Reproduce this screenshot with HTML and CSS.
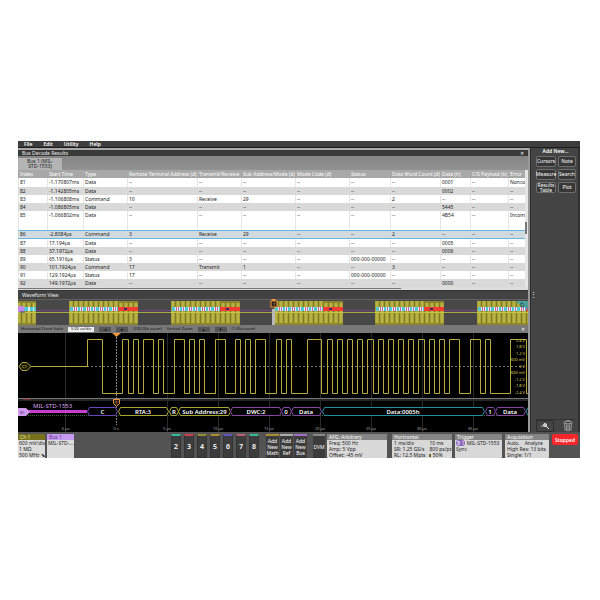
FILE: index.html
```html
<!DOCTYPE html>
<html lang="en">
<head>
<meta charset="utf-8">
<title>Oscilloscope bus decode</title>
<link rel="stylesheet" href="styles.css">
</head>
<body>
<div class="app">
  <nav class="menu"><a href="#">File</a><a href="#">Edit</a><a href="#">Utility</a><a href="#">Help</a></nav>
  <div class="workspace">
    <main class="main">
      <section>
        <h2 class="title">Bus Decode Results <button class="close" aria-label="Close results">✕</button></h2>
        <div class="tabs"><button class="tab">Bus 1 (MIL-<br>STD-1553)</button></div>
        <div class="results">
          <table>
            <colgroup><col class="w-index"><col class="w-time"><col class="w-mid"><col class="w-rta"><col class="w-mid"><col class="w-mode"><col class="w-mode"><col class="w-status"><col class="w-count"><col class="w-data"><col class="w-pay"><col></colgroup>
            <thead><tr><th>Index</th><th>Start Time</th><th>Type</th><th>Remote Terminal Address (d)</th><th>Transmit/Receive</th><th>Sub Address/Mode (d)</th><th>Mode Code (d)</th><th>Status</th><th>Data Word Count (d)</th><th>Data (h)</th><th>C/S Payload (b)</th><th>Error</th></tr></thead>
            <tbody>
              <tr class="first"><td>81</td><td>-1.170807ms</td><td>Data</td><td>--</td><td>--</td><td>--</td><td>--</td><td>--</td><td>--</td><td>0001</td><td>--</td><td>Nonco</td></tr>
              <tr class="alt"><td>82</td><td>-1.142805ms</td><td>Data</td><td>--</td><td>--</td><td>--</td><td>--</td><td>--</td><td>--</td><td>0002</td><td>--</td><td>--</td></tr>
              <tr><td>83</td><td>-1.106808ms</td><td>Command</td><td>10</td><td>Receive</td><td>29</td><td>--</td><td>--</td><td>2</td><td>--</td><td>--</td><td>--</td></tr>
              <tr class="alt"><td>84</td><td>-1.086805ms</td><td>Data</td><td>--</td><td>--</td><td>--</td><td>--</td><td>--</td><td>--</td><td>5445</td><td>--</td><td>--</td></tr>
              <tr class="tall"><td>85</td><td>-1.066802ms</td><td>Data</td><td>--</td><td>--</td><td>--</td><td>--</td><td>--</td><td>--</td><td>4B54</td><td>--</td><td>Incom</td></tr>
              <tr class="alt selected"><td>86</td><td>-2.8084µs</td><td>Command</td><td>3</td><td>Receive</td><td>29</td><td>--</td><td>--</td><td>2</td><td>--</td><td>--</td><td>--</td></tr>
              <tr><td>87</td><td>17.194µs</td><td>Data</td><td>--</td><td>--</td><td>--</td><td>--</td><td>--</td><td>--</td><td>0005</td><td>--</td><td>--</td></tr>
              <tr class="alt"><td>88</td><td>37.1972µs</td><td>Data</td><td>--</td><td>--</td><td>--</td><td>--</td><td>--</td><td>--</td><td>0006</td><td>--</td><td>--</td></tr>
              <tr><td>89</td><td>65.1916µs</td><td>Status</td><td>3</td><td>--</td><td>--</td><td>--</td><td>000-000-00000</td><td>--</td><td>--</td><td>--</td><td>--</td></tr>
              <tr class="alt"><td>90</td><td>101.1924µs</td><td>Command</td><td>17</td><td>Transmit</td><td>1</td><td>--</td><td>--</td><td>3</td><td>--</td><td>--</td><td>--</td></tr>
              <tr><td>91</td><td>129.1924µs</td><td>Status</td><td>17</td><td>--</td><td>--</td><td>--</td><td>000-000-00000</td><td>--</td><td>--</td><td>--</td><td>--</td></tr>
              <tr class="alt"><td>92</td><td>149.1972µs</td><td>Data</td><td>--</td><td>--</td><td>--</td><td>--</td><td>--</td><td>--</td><td>0000</td><td>--</td><td>--</td></tr>
            </tbody>
          </table>
          <div class="vscroll"><span></span></div>
        </div>
        <div class="hscroll"><span></span></div>
      </section>
      <section>
        <h2 class="title wave-title">Waveform View</h2>
        <svg class="plot" viewBox="18 299 510 26">
          <defs>
            <pattern id="bars" width="5" height="24" patternUnits="userSpaceOnUse"><path fill="#a8a236" d="M0 0h5v24H0z"/><path fill="#b8b244" d="M1 0h2v24H1z"/><path fill="#7e7926" d="M4 0h1v24H4z"/></pattern>
            <pattern id="packets" width="13" height="4" y="307" patternUnits="userSpaceOnUse"><path fill="#dcecf0" d="M0 0h13v4H0z"/><path fill="#4cc8d8" d="M1 0h3v4H1zM9 0h2v4H9z"/><path fill="#e0607c" d="M5 0h1v4H5z"/><path fill="#b864c8" d="M7 0h1v4H7zM12 0h1v4h-1z"/></pattern>
            <g id="burst"><path fill="url(#bars)" d="M0 301h69v24H0z"/><path fill="#8c872c" d="M49 301h20v2H49zM0 323h69v2H0z"/><path fill="url(#packets)" d="M1 307h48v4H1z"/><path fill="#f43b31" d="M49 307h20v4H49z"/><path fill="#3b2b66" d="M55 308h3v2h-3z"/><path fill="#c7c644" d="M0 312h69v1H0z"/></g>
          </defs>
          <path fill="#484848" d="M18 299h510v26H18z"/>
          <path fill="#606060" d="M18 299h510v1H18z"/>
          <path fill="#7c3d84" d="M18 310h510v1H18z"/><path fill="#a5ab3d" d="M18 312h510v1H18z"/>
          <use href="#burst" x="-33"/><use href="#burst" x="69"/><use href="#burst" x="171"/><use href="#burst" x="274"/><use href="#burst" x="375"/><use href="#burst" x="477"/>
          <path fill="#4cc8d8" d="M18 307h18v4H18z"/><path fill="#dcecf0" d="M28 307h2v4h-2zM33 307h1v4h-1z"/>
          <path fill="#c887e8" d="M18 306h5l2 3-2 3h-5z"/><path fill="none" stroke="#28407c" d="M20 312h5"/>
          <path fill="#f0963c" d="M271 299h5l-2 3z"/><rect x="271" y="301" width="6" height="6" fill="#2a2018" stroke="#f0963c"/><text class="tiny orange" x="273" y="306">T</text>
          <path fill="#b9b9b9" d="M272 309h3v16h-3z"/>
          <path fill="#2aa5c4" fill-opacity=".7" d="M515 301h13v9z"/><circle cx="522" cy="305" r="2" fill="none" stroke="#285870"/>
        </svg>
        <div class="zoombar">
          <label for="zs">Horizontal Zoom Scale</label><input id="zs" value="5.00 us/div"><button aria-label="Wider">◄</button><button aria-label="Narrower">►</button><span>(200.00x zoom)</span><span class="vert">Vertical Zoom</span><button aria-label="Taller">▲</button><button aria-label="Shorter">▼</button><span>(1.00x zoom)</span><button class="close" aria-label="Close zoom">✕</button>
        </div>
        <svg class="plot" viewBox="18 333 510 99">
          <path fill="#000" d="M18 333h510v99H18z"/>
          <path stroke="#292929" fill="none" d="M65.500 333v99M167.500 333v99M218.500 333v99M269.500 333v99M320.500 333v99M371.500 333v99M422.500 333v99M473.500 333v99"/>
          <path stroke="#888" fill="none" stroke-dasharray="2 1" d="M116.500 337v88"/>
          <path stroke="#777" fill="none" stroke-dasharray="2 2" d="M87 366.500h437"/>
          <path fill="#252525" d="M18 398h510v3H18z"/><path fill="#777" d="M18 398h510v1H18z"/>
          <path fill="#7c2430" d="M23 399h8v1h-8z"/>
          <path stroke="#b5ab3e" fill="none" d="M28 366.500H87.500V339.500H102.500V393.500H122.500V339.500H128.500V393.500H133.500V339.500H138.500V393.500H143.500V339.500H153.500V393.500H158.500V339.500H163.500V393.500H174.500V339.500H184.500V393.500H189.500V339.500H194.500V393.500H199.500V339.500H204.500V393.500H215.500V339.500H225.500V393.500H235.500V339.500H240.500V393.500H245.500V339.500H250.500V393.500H255.500V339.500H265.500V393.500H276.500V339.500H281.500V393.500H286.500V339.500H291.500V393.500H307.500V339.500H321.500V393.500H327.500V339.500H332.500V393.500H337.500V339.500H342.500V393.500H347.500V339.500H352.500V393.500H357.500V339.500H362.500V393.500H367.500V339.500H373.500V393.500H378.500V339.500H383.500V393.500H388.500V339.500H393.500V393.500H398.500V339.500H403.500V393.500H408.500V339.500H413.500V393.500H418.500V339.500H424.500V393.500H429.500V339.500H434.500V393.500H439.500V339.500H444.500V393.500H449.500V339.500H459.500V393.500H470.500V339.500H480.500V393.500H485.500V339.500H490.500V393.500H510.500V339.500H526.500V393.500H528"/>
          <path fill="#211f08" stroke="#aaa23c" d="M19 366.500l3-4h5l4 4-4 4h-5z"/><text class="tiny yellow" x="22" y="368">C1</text>
          <g class="tiny yellow end"><text x="525" y="342">2.4 V</text><text x="525" y="348">1.8 V</text><text x="525" y="355">1.2 V</text><text x="525" y="361">600 mV</text><text x="525" y="368">0 V</text><text x="525" y="374">-600 mV</text><text x="525" y="381">-1.2 V</text><text x="525" y="387">-1.8 V</text><text x="525" y="394">-2.4 V</text></g>
          <path fill="#f0963c" d="M112 333h9l-4.500 4z"/>
          <path fill="#2a2018" stroke="#e8963c" d="M113.500 399.500h6v4l-3 3-3-3z"/><text class="tiny orange" x="115" y="404">T</text>
          <path stroke="#406238" stroke-dasharray="1 1" d="M28 415.500h490"/>
          <path fill="#c63ecb" d="M28 410h59v3H28z"/><path fill="#cf9cf0" d="M18 408h8l4 4-4 4h-8z"/><text class="tiny dark" x="20" y="414">B1</text>
          <text class="bus-name" x="33" y="408">MIL-STD-1553</text>
          <g fill="#000">
            <path stroke="#6848b8" d="M87.500 411.500l2-4h26l2 4-2 4h-26z"/>
            <path stroke="#aaa632" d="M118.500 411.500l2-4h46l2 4-2 4h-46zM169.500 411.500l2-4h5l2 4-2 4h-5zM178.500 411.500l2-4h48l2 4-2 4h-48z"/>
            <path stroke="#8347a4" d="M230.500 411.500l2-4h47l2 4-2 4h-47zM281.500 411.500l2-4h6l2 4-2 4h-6zM291.500 411.500l2-4h26l2 4-2 4h-26zM485.500 411.500l2-4h6l2 4-2 4h-6zM495.500 411.500l2-4h26l2 4-2 4h-26z"/>
            <path stroke="#258e9e" d="M322.500 411.500l2-4h158l2 4-2 4h-158zM530 407.500h-2l-2 4 2 4h2"/>
          </g>
          <g class="packet"><text x="102.500" y="414">C</text><text x="143" y="414">RTA:3</text><text x="174" y="414">R</text><text x="204.500" y="414">Sub Address:29</text><text x="256" y="414">DWC:2</text><text x="286" y="414">0</text><text x="306" y="414">Data</text><text x="403" y="414">Data:0005h</text><text x="490" y="414">1</text><text x="510" y="414">Data</text></g>
          <g class="tiny axis"><text x="65" y="430">-5 µs</text><text x="116" y="430">0 s</text><text x="167" y="430">5 µs</text><text x="218" y="430">10 µs</text><text x="269" y="430">15 µs</text><text x="320" y="430">20 µs</text><text x="371" y="430">25 µs</text><text x="422" y="430">30 µs</text><text x="473" y="430">35 µs</text></g>
        </svg>
      </section>
    </main>
    <aside class="side">
      <h2>Add New...</h2>
      <div class="add-grid"><button>Cursors</button><button>Note</button><button>Measure</button><button>Search</button><button>Results<br>Table</button><button>Plot</button></div>
      <div class="grip">⋮</div>
      <div class="tools">
        <button class="zoom-tool" aria-label="Zoom"><svg width="16" height="10" viewBox="0 0 16 10"><circle cx="8" cy="4" r="1.500" fill="#bbb" stroke="#ddd"/><path d="M9 5l3 3" stroke="#eee"/><path d="M4 5h3" stroke="#bbb"/></svg></button>
        <button class="trash" aria-label="Delete"><svg width="10" height="12" viewBox="0 0 10 12" fill="none" stroke="#aaa"><ellipse cx="5" cy="2.500" rx="4" ry="1.500"/><path d="M1.500 3l.5 7q3 1.800 6 0l.5-7M3.500 5v5M5 5v5M6.500 5v5M4 .5h2" stroke-width=".8"/></svg></button>
      </div>
    </aside>
  </div>
  <footer class="settings">
    <section class="badge ch"><h3>Ch 1</h3><p>600 mV/div<br>1 MΩ<br>500 MHz ⬊</p></section>
    <section class="badge bus"><h3>Bus 1</h3><p>MIL-STD-...</p></section>
    <div class="channels">
      <button class="teal">2</button><button class="red">3</button><button class="olive">4</button><button class="gold">5</button><button class="violet">6</button><button class="rose">7</button><button class="teal">8</button>
    </div>
    <div class="adders"><button class="gold">Add<br>New<br>Math</button><button class="white">Add<br>New<br>Ref</button><button class="lilac">Add<br>New<br>Bus</button></div>
    <button class="dvm">DVM</button>
    <section class="card afg"><h3>AFG: Arbitrary</h3><p>Freq: 500 Hz<br>Amp: 5 Vpp<br>Offset: -45 mV</p></section>
    <section class="card horiz"><h3>Horizontal</h3><div class="pair"><p>1 ms/div<br>SR: 1.25 GS/s<br>RL: 12.5 Mpts</p><p>10 ms<br>800 ps/pt<br><i></i> 50%</p></div></section>
    <section class="card trig"><h3>Trigger</h3><p><b>B 1</b> MIL-STD-1553<br>Sync</p></section>
    <section class="card acq"><h3>Acquisition</h3><p>Auto,&nbsp; &nbsp; Analyze<br>High Res: 13 bits<br>Single: 1/1</p></section>
    <button class="stopped">Stopped</button>
  </footer>
</div>
</body>
</html>
```
FILE: styles.css
```css
* { box-sizing: border-box; }
body { margin: 0; background: #fff; font: 5px/8px "Noto Sans", sans-serif; color: #222; }
h2, h3, p { margin: 0; font-size: 5px; font-weight: 400; }
button, input { font: inherit; color: inherit; border: 0; padding: 0; margin: 0; background: none; }
.app { margin: 141px 20px 142px 18px; background: #474747; }

.menu { display: flex; gap: 11px; height: 7px; padding: 0 6px; background: #3d3d3d; border-bottom: 1px solid #1c1c1c; line-height: 7px; }
.menu a { color: #fff; text-decoration: none; font-weight: 600; }

.workspace { display: flex; }
.main { flex: 1; min-width: 0; border-top: 2px solid #aaa; border-right: 2px solid #999; }
.title { display: flex; justify-content: space-between; height: 6px; padding: 0 4px; background: #393939; color: #eee; line-height: 6px; }
.close { color: #fff; line-height: 6px; }
.tabs { height: 14px; padding-top: 2px; background: linear-gradient(#858585, #929292); }
.tab { width: 44px; height: 12px; border-radius: 1px 1px 0 0; background: #b4b4b4; line-height: 5px; color: #222; }
.results { display: flex; background: #fff; }
table { flex: 1; min-width: 0; width: 100%; table-layout: fixed; border-collapse: separate; border-spacing: 0; }
.w-index { width: 29px; }
.w-time { width: 36px; }
.w-mid { width: 44px; }
.w-rta { width: 70px; }
.w-mode { width: 54px; }
.w-status { width: 41px; }
.w-count { width: 50px; }
.w-data { width: 30px; }
.w-pay { width: 38px; }
th, td { height: 8px; padding: 0 0 0 2px; text-align: left; font-weight: 400; white-space: nowrap; line-height: 8px; }
th { background: #a8a8a8; color: #fff; }
td { background: linear-gradient(#e6e6e6, #e6e6e6) left / 1px 100% no-repeat; vertical-align: top; }
.first td { height: 9px; }
.tall td { height: 19px; }
.alt td { background: #d9d9d9; }
.selected td { height: 9px; background: #d3dade; box-shadow: inset 0 1px #64b6e4, inset 0 -1px #64b6e4; }
.vscroll { width: 3px; padding-top: 52px; background: #e6e6e6; }
.vscroll span { display: block; width: 2px; height: 12px; background: #777; }
.hscroll { height: 4px; background: #ddd; border-bottom: 1px solid #333; padding-top: 1px; }
.hscroll span { display: block; width: 75%; height: 1px; background: #777; }
.wave-title { height: 8px; line-height: 8px; background: #424242; }
.plot { display: block; width: 100%; height: auto; }
.zoombar { display: flex; align-items: center; gap: 5px; height: 8px; padding: 0 3px; background: #787878; color: #111; font-size: 4px; white-space: nowrap; }
.zoombar input { width: 26px; height: 5px; background: #eee; text-align: center; }
.zoombar button { width: 12px; height: 5px; background: #555; line-height: 5px; }
.zoombar .close { width: 4px; margin-left: auto; background: none; font-size: 5px; }

.tiny { font-size: 4px; }
.yellow { fill: #ded45a; }
.orange { fill: #ffb050; }
.dark { fill: #503070; }
.end { text-anchor: end; }
.axis { fill: #aaa; text-anchor: middle; }
.bus-name { font-size: 6px; fill: #d9a4ee; }
.packet { font-size: 6px; font-weight: 600; fill: #fff; text-anchor: middle; }

.side { display: flex; flex-direction: column; width: 50px; padding: 0 3px 0 5px; background: #444; border-left: 1px solid #292929; border-right: 2px solid #303030; color: #fff; }
.side h2 { margin-bottom: 1px; text-align: center; font-weight: 600; line-height: 7px; }
.add-grid { display: grid; grid-template-columns: 20px 18px; gap: 2px; }
.add-grid button { height: 11px; border: 1px solid #6e6e6e; border-radius: 2px; background: #373737; line-height: 5px; display: flex; align-items: center; justify-content: center; text-align: center; }
.side .grip { margin: 98px 0 0 -6px; width: 4px; font-size: 7px; line-height: 8px; }
.tools { display: flex; justify-content: space-between; align-items: center; margin-top: auto; padding: 0 2px 0 0; height: 13px; border-top: 1px solid #333; }
.tools svg { display: block; }
.zoom-tool { border: 1px solid #2c2c2c; border-radius: 1px; }

.settings { display: flex; height: 26px; padding: 2px 2px 0 0; background: #535353; line-height: 6px; }
.settings h3 { padding-left: 2px; line-height: 6px; }
.settings p { padding-left: 2px; white-space: nowrap; }
.badge { width: 27px; margin-right: 2px; border-radius: 1px 1px 0 0; background: #dcdcdc; }
.badge p { padding-left: 1px; }
.ch h3 { background: #77711e; color: #f0e896; }
.bus h3 { background: #c69af0; color: #5b3190; }
.channels { display: flex; gap: 3px; margin-left: auto; }
.channels button { width: 10px; font-size: 7px; font-weight: 600; }
.channels button, .adders button, .dvm { background: #3c3c3c; color: #fff; border: 1px solid #343434; border-top: 2px solid #888; }
.adders { display: flex; gap: 1px; margin: 0 6px 0 7px; }
.adders button { width: 13px; border-width: 2px 0 1px; line-height: 6px; }
.settings .teal { border-top-color: #36b99a; }
.settings .red { border-top-color: #ce3c50; }
.settings .olive { border-top-color: #8e8b32; }
.settings .gold { border-top-color: #ad8d32; }
.settings .violet { border-top-color: #6254be; }
.settings .rose { border-top-color: #b96073; }
.settings .white { border-top-color: #aaa; }
.settings .lilac { border-top-color: #a46cc4; }
.settings .dvm { width: 12px; margin-right: 2px; border-width: 2px 0 1px; }
.card { border-radius: 1px; background: #d8d8d8; }
.card h3 { background: #858585; color: #fff; }
.afg { width: 60px; margin-right: 5px; }
.horiz { width: 60px; margin-right: 3px; }
.trig { width: 47px; margin-right: 3px; }
.trig p { padding-left: 1px; }
.acq { width: 44px; margin-right: 3px; }
.pair { display: flex; gap: 2px; }
.pair i { display: inline-block; width: 2px; height: 3px; background: #7b6420; }
.trig b { padding: 0 1px; border-radius: 3px; background: #8962bd; color: #fff; font-weight: 400; }
.stopped { width: 26px; height: 11px; border-radius: 2px; background: #f4282a; color: #fff; font-weight: 600; }
```
